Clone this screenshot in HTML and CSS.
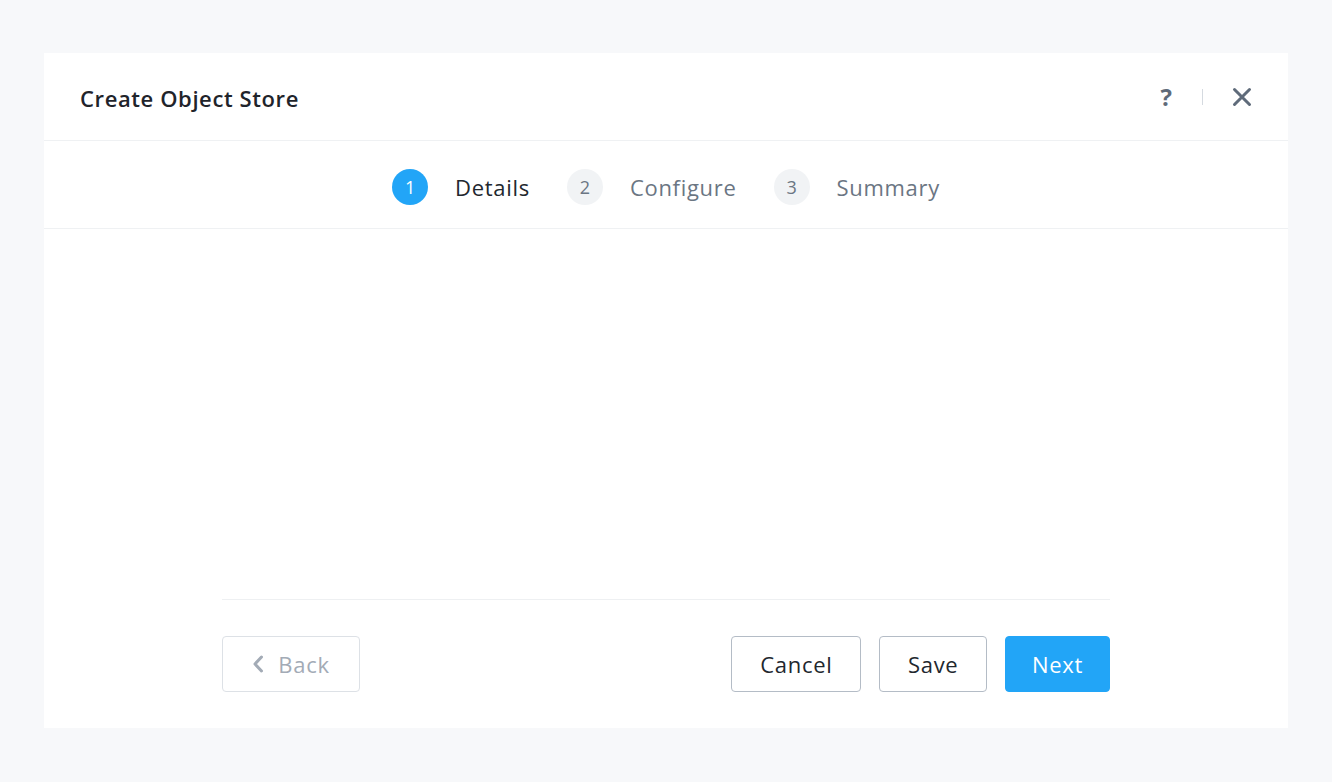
FILE: index.html
```html
<!DOCTYPE html>
<html>
<head>
<meta charset="utf-8">
<link rel="stylesheet" href="styles.css">
</head>
<body>
<div class="modal">
  <div class="modal-header">
    <div class="modal-title">Create Object Store</div>
    <div class="header-actions">
      <span class="help">?</span>
      <span class="sep"></span>
      <svg class="close" width="20" height="20" viewBox="0 0 20 20"><path d="M2.5 2.5 L17.5 17.5 M17.5 2.5 L2.5 17.5" stroke="#5f6b7a" stroke-width="3" stroke-linecap="round"/></svg>
    </div>
  </div>
  <div class="steps">
    <div class="step active"><span class="num">1</span><span class="label">Details</span></div>
    <div class="step"><span class="num">2</span><span class="label">Configure</span></div>
    <div class="step"><span class="num">3</span><span class="label">Summary</span></div>
  </div>
  <div class="modal-body"></div>
  <div class="modal-footer">
    <div class="footer-inner">
      <button class="btn btn-back"><svg width="12" height="18" viewBox="0 0 12 18"><path d="M9.5 2 L3 9 L9.5 16" fill="none" stroke="#a3abb6" stroke-width="3" stroke-linecap="round" stroke-linejoin="round"/></svg><span>Back</span></button>
      <div class="right-btns">
        <button class="btn btn-cancel">Cancel</button>
        <button class="btn btn-save">Save</button>
        <button class="btn btn-primary">Next</button>
      </div>
    </div>
  </div>
</div>
</body>
</html>
```
FILE: styles.css
```css
html, body {
  margin: 0;
  padding: 0;
  background: #f7f8fa;
  font-family: "Open Sans", Lato, sans-serif;
}
body {
  padding: 53px 44px 0 44px;
  height: 782px;
  box-sizing: border-box;
}
.modal {
  background: #ffffff;
  height: 675px;
  display: flex;
  flex-direction: column;
}
.modal-header {
  height: 87px;
  border-bottom: 1px solid #eff1f3;
  display: flex;
  align-items: center;
  justify-content: space-between;
  padding: 0 36px;
}
.modal-title {
  font-size: 22px;
  font-weight: 600;
  color: #1f242b;
  letter-spacing: 0.6px;
  margin-top: 2px;
}
.header-actions {
  display: flex;
  align-items: center;
}
.help {
  font-size: 24px;
  font-weight: 700;
  color: #5f6b7a;
  line-height: 1;
}
.sep {
  width: 1px;
  height: 16px;
  background: #d5dae0;
  margin: 0 29px 0 30px;
}
.close {
  display: block;
}
.steps {
  height: 88px;
  box-sizing: border-box;
  padding-top: 4px;
  border-bottom: 1px solid #eff1f3;
  display: flex;
  align-items: center;
  justify-content: center;
  gap: 37px;
}
.step {
  display: flex;
  align-items: center;
  gap: 27px;
}
.num {
  width: 36px;
  height: 36px;
  border-radius: 50%;
  background: #f1f3f5;
  color: #6b7683;
  font-size: 18px;
  display: flex;
  align-items: center;
  justify-content: center;
}
.label {
  font-size: 22px;
  letter-spacing: 0.7px;
  color: #6b7683;
}
.step.active .num {
  background: #22a5f7;
  color: #ffffff;
}
.step.active .label {
  color: #22272e;
}
.modal-body {
  flex: 1;
}
.modal-footer {
  padding: 0 178px 36px 178px;
}
.footer-inner {
  border-top: 1px solid #eef0f2;
  padding-top: 36px;
  display: flex;
  justify-content: space-between;
}
.right-btns {
  display: flex;
  gap: 18px;
}
.btn {
  height: 56px;
  padding: 0 26px;
  border: 1.5px solid #b4bcc6;
  border-radius: 4px;
  background: #ffffff;
  font-family: "Open Sans", Lato, sans-serif;
  font-size: 22px;
  letter-spacing: 0.7px;
  color: #22272e;
  display: flex;
  align-items: center;
  justify-content: center;
  gap: 14px;
}
.btn-cancel {
  padding: 0 28px;
}
.btn-save {
  padding: 0 27.5px;
}
.btn-back {
  width: 138px;
  border-color: #dde1e6;
  color: #a3abb6;
}
.btn-primary {
  background: #22a5f7;
  border-color: #22a5f7;
  color: #ffffff;
}
```
